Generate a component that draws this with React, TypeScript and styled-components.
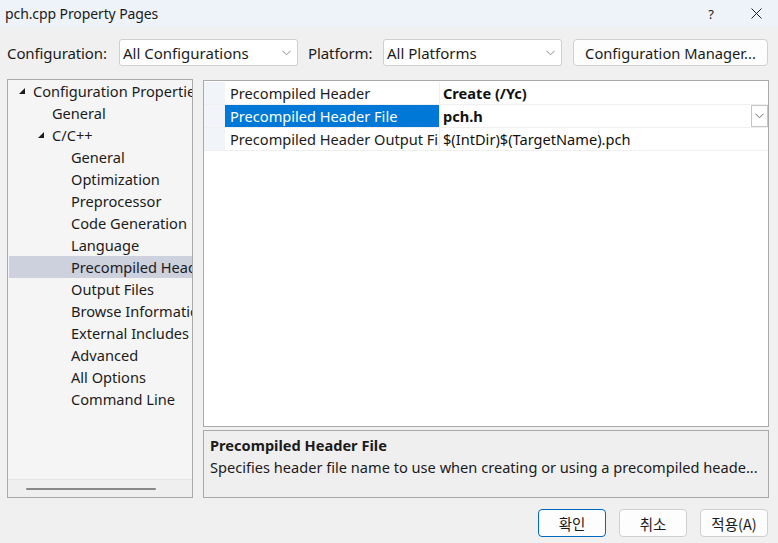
import React from "react";
import styled, { createGlobalStyle } from "styled-components";

const Global = createGlobalStyle`
  html, body { margin: 0; padding: 0; background: #f0f0f0; }
  body { width: 778px; height: 543px; overflow: hidden; font-family: "Noto Sans", "Open Sans", sans-serif; color: #1b1b1b; }
  * { box-sizing: border-box; }
`;

const Window = styled.div`
  width: 778px;
  height: 543px;
  display: flex;
  flex-direction: column;
  background: #f0f0f0;
`;

const TitleBar = styled.div`
  height: 27px;
  background: #eef3f9;
  display: flex;
  align-items: center;
  padding-left: 5px;
`;

const Title = styled.div`
  flex: 1;
  font-size: 14px;
  letter-spacing: -0.1px;
  color: #1a1a1a;
`;

const TitleButton = styled.div<{ $w: number }>`
  width: ${(p) => p.$w}px;
  height: 27px;
  display: flex;
  align-items: center;
  justify-content: center;
  font-size: 13px;
  color: #222;
`;

const Toolbar = styled.div`
  display: flex;
  align-items: center;
  height: 27px;
  margin-top: 12px;
  padding-left: 7px;
`;

const ToolLabel = styled.div<{ $w: number; $ml?: number }>`
  width: ${(p) => p.$w}px;
  margin-left: ${(p) => p.$ml ?? 0}px;
  font-size: 15px;
  letter-spacing: -0.1px;
`;

const Combo = styled.div`
  width: 179px;
  height: 27px;
  background: #fff;
  border: 1px solid #cfcfcf;
  border-radius: 3px;
  display: flex;
  align-items: center;
  padding: 0 6px 0 3px;
  font-size: 15px;
`;

const ComboText = styled.span`
  flex: 1;
`;

const ToolButton = styled.div`
  width: 195px;
  height: 27px;
  margin-left: 11px;
  background: #fdfdfd;
  border: 1px solid #d0d0d0;
  border-radius: 4px;
  display: flex;
  align-items: center;
  justify-content: center;
  font-size: 14.7px;
`;

const Main = styled.div`
  display: flex;
  margin-top: 13px;
  padding-left: 7px;
  height: 419px;
`;

const TreePanel = styled.div`
  width: 186px;
  height: 419px;
  border: 1px solid #a9a9a9;
  background: #f5f5f5;
  display: flex;
  flex-direction: column;
`;

const TreeList = styled.div`
  flex: 1;
  padding-left: 1px;
  overflow: hidden;
`;

const TreeRow = styled.div<{ $level: number; $selected?: boolean }>`
  height: 22px;
  display: flex;
  align-items: center;
  padding-left: ${(p) => 24 + p.$level * 19}px;
  position: relative;
  white-space: nowrap;
  overflow: hidden;
  font-size: 14.6px;
  background: ${(p) => (p.$selected ? "#cdd0dd" : "transparent")};
  color: #1c1c1c;
`;

const Expander = styled.svg`
  position: absolute;
  top: 8px;
`;

const HScroll = styled.div`
  height: 18px;
  background: #efefef;
  border-top: 1px solid #e4e4e4;
  display: flex;
  align-items: center;
  padding-left: 18px;
`;

const Thumb = styled.div`
  width: 130px;
  height: 2px;
  background: #878787;
  border-radius: 1px;
`;

const RightCol = styled.div`
  margin-left: 10px;
  width: 566px;
  display: flex;
  flex-direction: column;
  padding-top: 1px;
`;

const GridPanel = styled.div`
  height: 349px;
  background: #fff;
  border: 1px solid #a9a9a9;
  padding-top: 1px;
  display: flex;
  flex-direction: column;
`;

const GridRow = styled.div`
  height: 23px;
  display: flex;
  border-bottom: 1px solid #efefef;
`;

const GutterCell = styled.div`
  width: 21px;
  background: #f1f5fa;
`;

const NameCell = styled.div<{ $selected?: boolean }>`
  width: 215px;
  padding-left: 5px;
  display: flex;
  align-items: center;
  font-size: 14.6px;
  white-space: nowrap;
  overflow: hidden;
  background: ${(p) => (p.$selected ? "#0078d7" : "#fff")};
  color: ${(p) => (p.$selected ? "#ffffff" : "#1c1c1c")};
  border-right: 1px solid #efefef;
`;

const ValueCell = styled.div<{ $bold?: boolean }>`
  flex: 1;
  padding-left: 3px;
  display: flex;
  align-items: center;
  font-size: 14.6px;
  font-weight: ${(p) => (p.$bold ? 700 : 400)};
  color: #111;
  white-space: nowrap;
`;

const ValueText = styled.span`
  flex: 1;
`;

const DropButton = styled.div`
  width: 17px;
  height: 22px;
  border: 1px solid #c6c6c6;
  background: #fff;
  display: flex;
  align-items: center;
  justify-content: center;
`;

const GridRest = styled.div`
  flex: 1;
  display: flex;
`;

const DescPanel = styled.div`
  margin-top: 3px;
  height: 68px;
  border: 1px solid #a9a9a9;
  background: #efefef;
  padding: 3px 6px;
`;

const DescTitle = styled.div`
  font-size: 14.6px;
  font-weight: 700;
  height: 22px;
  line-height: 22px;
`;

const DescText = styled.div`
  font-size: 14.6px;
  line-height: 22px;
  white-space: nowrap;
`;

const Footer = styled.div`
  display: flex;
  justify-content: flex-end;
  padding-right: 10px;
  margin-top: 11px;
  gap: 13px;
`;

const FooterButton = styled.div<{ $primary?: boolean }>`
  width: 68px;
  height: 28px;
  border-radius: 4px;
  background: #fdfdfd;
  border: 1px solid ${(p) => (p.$primary ? "#0067c0" : "#d0d0d0")};
  display: flex;
  align-items: center;
  justify-content: center;
  font-family: "Noto Sans CJK KR", "Noto Sans", sans-serif;
  font-size: 14.5px;
  color: #1a1a1a;
`;

const Chevron = ({ color = "#8a8a8a" }: { color?: string }) => (
  <svg width="9" height="6" viewBox="0 0 9 6">
    <path d="M0.5 0.8 L4.5 4.8 L8.5 0.8" fill="none" stroke={color} strokeWidth="1" />
  </svg>
);

const tree: { label: string; level: number; expander?: boolean; selected?: boolean }[] = [
  { label: "Configuration Properties", level: 0, expander: true },
  { label: "General", level: 1 },
  { label: "C/C++", level: 1, expander: true },
  { label: "General", level: 2 },
  { label: "Optimization", level: 2 },
  { label: "Preprocessor", level: 2 },
  { label: "Code Generation", level: 2 },
  { label: "Language", level: 2 },
  { label: "Precompiled Headers", level: 2, selected: true },
  { label: "Output Files", level: 2 },
  { label: "Browse Information", level: 2 },
  { label: "External Includes", level: 2 },
  { label: "Advanced", level: 2 },
  { label: "All Options", level: 2 },
  { label: "Command Line", level: 2 },
];

export default function App() {
  return (
    <Window>
      <Global />
      <TitleBar>
        <Title>pch.cpp Property Pages</Title>
        <TitleButton $w={46}>?</TitleButton>
        <TitleButton $w={44}>
          <svg width="11" height="11" viewBox="0 0 11 11">
            <path d="M0.5 0.5 L10.5 10.5 M10.5 0.5 L0.5 10.5" stroke="#222" strokeWidth="1" />
          </svg>
        </TitleButton>
      </TitleBar>
      <Toolbar>
        <ToolLabel $w={112}>Configuration:</ToolLabel>
        <Combo>
          <ComboText>All Configurations</ComboText>
          <Chevron />
        </Combo>
        <ToolLabel $w={75} $ml={10}>Platform:</ToolLabel>
        <Combo>
          <ComboText>All Platforms</ComboText>
          <Chevron />
        </Combo>
        <ToolButton>Configuration Manager...</ToolButton>
      </Toolbar>
      <Main>
        <TreePanel>
          <TreeList>
            {tree.map((t, i) => (
              <TreeRow key={i} $level={t.level} $selected={t.selected}>
                {t.expander && (
                  <Expander width="6" height="6" viewBox="0 0 6 6" style={{ left: 10 + t.level * 19 }}>
                    <path d="M6 0 L6 6 L0 6 Z" fill="#1c1c1c" />
                  </Expander>
                )}
                {t.label}
              </TreeRow>
            ))}
          </TreeList>
          <HScroll>
            <Thumb />
          </HScroll>
        </TreePanel>
        <RightCol>
          <GridPanel>
            <GridRow>
              <GutterCell />
              <NameCell>Precompiled Header</NameCell>
              <ValueCell $bold>Create (/Yc)</ValueCell>
            </GridRow>
            <GridRow>
              <GutterCell />
              <NameCell $selected>Precompiled Header File</NameCell>
              <ValueCell $bold>
                <ValueText>pch.h</ValueText>
                <DropButton>
                  <Chevron color="#666" />
                </DropButton>
              </ValueCell>
            </GridRow>
            <GridRow>
              <GutterCell />
              <NameCell>Precompiled Header Output File</NameCell>
              <ValueCell>$(IntDir)$(TargetName).pch</ValueCell>
            </GridRow>
            <GridRest />
          </GridPanel>
          <DescPanel>
            <DescTitle>Precompiled Header File</DescTitle>
            <DescText>Specifies header file name to use when creating or using a precompiled heade...</DescText>
          </DescPanel>
        </RightCol>
      </Main>
      <Footer>
        <FooterButton $primary>확인</FooterButton>
        <FooterButton>취소</FooterButton>
        <FooterButton>적용(A)</FooterButton>
      </Footer>
    </Window>
  );
}
